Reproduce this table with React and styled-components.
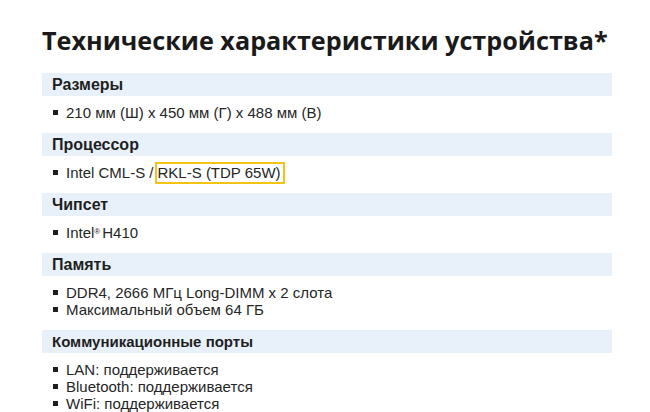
import styled, {createGlobalStyle} from "styled-components";

const GlobalStyle = createGlobalStyle`
  body {
    margin: 0;
    background: #ffffff;
    font-family: "Liberation Sans", Arial, sans-serif;
  }
`

const Page = styled.div`
  width: 650px;
  height: 412px;
  overflow: hidden;
  padding: 25px 38px 0 42px;
  box-sizing: border-box;
`

const Title = styled.h1`
  margin: 0 0 18px 0;
  font-family: "Open Sans", "Liberation Sans", Arial, sans-serif;
  font-size: 25.2px;
  font-weight: 700;
  color: #1a1a1a;
  line-height: 30px;
  white-space: nowrap;
`

const Section = styled.section`
  display: flex;
  flex-direction: column;
`

const SectionHead = styled.div`
  height: 23px;
  display: flex;
  align-items: center;
  padding-left: 10px;
  background: #e8f1f9;
  font-family: "Liberation Sans", Arial, sans-serif;
  font-size: ${(p) => (p.small ? "15px" : "16px")};
  font-weight: bold;
  color: #1f1f1f;
`

const List = styled.ul`
  list-style: none;
  margin: 0;
  padding: 8px 0 12px 11px;
`

const Item = styled.li`
  display: flex;
  align-items: center;
  height: 17px;
  font-family: "Liberation Sans", Arial, sans-serif;
  font-size: 15px;
  color: #262626;
  white-space: nowrap;

  &::before {
    content: "";
    width: 5px;
    height: 5px;
    background: #1e1e1e;
    margin-right: 8px;
    flex: none;
  }
`

const Mark = styled.span`
  border: 2px solid #f3c316;
  padding: 1px 2px 1px 1px;
  line-height: 16px;
  margin-left: 1px;
`

const Reg = styled.sup`
  font-size: 8px;
  line-height: 0;
  margin-right: 2px;
  position: relative;
  top: -1px;
`

const specs = [
    {title: "Размеры", items: ["210 мм (Ш) x 450 мм (Г) x 488 мм (В)"]},
    {title: "Процессор", items: [<>Intel CML-S /<Mark>RKL-S (TDP 65W)</Mark></>]},
    {title: "Чипсет", items: [<>Intel<Reg>®</Reg>H410</>]},
    {title: "Память", items: ["DDR4, 2666 МГц Long-DIMM x 2 слота", "Максимальный объем 64 ГБ"]},
    {
        title: "Коммуникационные порты",
        small: true,
        items: ["LAN: поддерживается", "Bluetooth: поддерживается", "WiFi: поддерживается"],
    },
]

const App = () => {
    return (
        <>
            <GlobalStyle/>
            <Page>
                <Title>Технические характеристики устройства*</Title>
                {specs.map((spec) => (
                    <Section key={spec.title}>
                        <SectionHead small={spec.small}>{spec.title}</SectionHead>
                        <List>
                            {spec.items.map((item, i) => (
                                <Item key={i}>{item}</Item>
                            ))}
                        </List>
                    </Section>
                ))}
            </Page>
        </>
    )
}

export default App
